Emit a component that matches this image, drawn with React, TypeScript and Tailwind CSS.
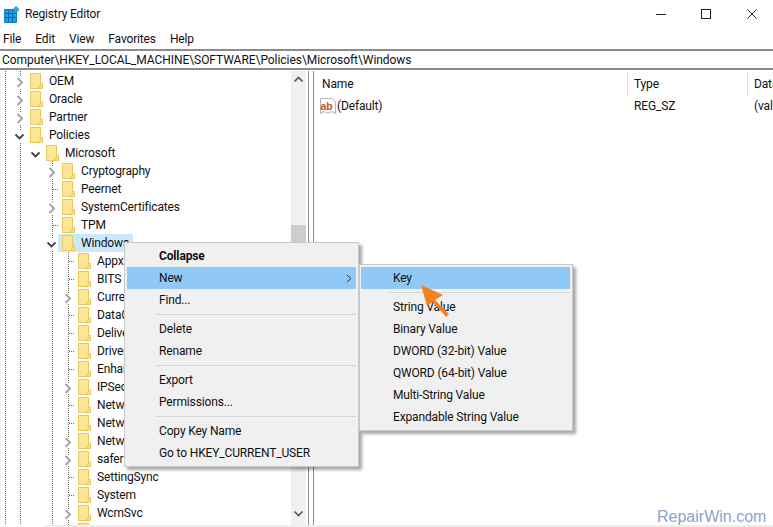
const F = "font-['Roboto','Open_Sans',sans-serif]";

function Folder() {
  return (
    <svg width="13" height="16" viewBox="0 0 13 16" className="shrink-0">
      <path d="M.5.5H10.5V10.5H12.5V15.5H.5Z" fill="#fde596" stroke="#ecc75a" />
      <path d="M10.5 10.5V13.5H9.5V15.5" fill="none" stroke="#ecc75a" />
    </svg>
  );
}

function Chevron({ dir }: { dir?: "r" | "d" }) {
  if (!dir) return <span className="w-[9px] shrink-0" />;
  return (
    <svg width="9" height="11" viewBox="0 0 9 11" className="mt-[2px] shrink-0 bg-white">
      {dir === "r" ? (
        <path d="M2.5 1L7 5.5L2.5 10" fill="none" stroke="#a6a6a6" strokeWidth="2" />
      ) : (
        <path d="M.5 3.5L4.5 7.5L8.5 3.5" fill="none" stroke="#404040" strokeWidth="1.8" />
      )}
    </svg>
  );
}

type Row = { t: string; d: number; c?: "r" | "d"; sel?: boolean };
const rows: Row[] = [
  { t: "OEM", d: 0, c: "r" },
  { t: "Oracle", d: 0, c: "r" },
  { t: "Partner", d: 0, c: "r" },
  { t: "Policies", d: 0, c: "d" },
  { t: "Microsoft", d: 1, c: "d" },
  { t: "Cryptography", d: 2, c: "r" },
  { t: "Peernet", d: 2 },
  { t: "SystemCertificates", d: 2, c: "r" },
  { t: "TPM", d: 2 },
  { t: "Windows", d: 2, c: "d", sel: true },
  { t: "AppxPackage", d: 3 },
  { t: "BITS", d: 3 },
  { t: "CurrentVersion", d: 3, c: "r" },
  { t: "DataCollection", d: 3 },
  { t: "DeliveryOptimization", d: 3 },
  { t: "DriverSearching", d: 3 },
  { t: "EnhancedStorage", d: 3 },
  { t: "IPSec", d: 3, c: "r" },
  { t: "Network Connections", d: 3 },
  { t: "NetworkConnectivity", d: 3 },
  { t: "NetworkProvider", d: 3, c: "r" },
  { t: "safer", d: 3, c: "r" },
  { t: "SettingSync", d: 3 },
  { t: "System", d: 3 },
  { t: "WcmSvc", d: 3, c: "r" },
  { t: "", d: 3 },
];

function TreeRow({ r }: { r: Row }) {
  const pad = ["pl-[15px]", "pl-[31px]", "pl-[47px]", "pl-[63px]"][r.d];
  return (
    <div className={`relative flex h-[18px] items-center ${pad}`}>
      <Chevron dir={r.c} />
      <div className={`ml-[2px] flex h-[18px] items-center pl-[4px] pr-[4px] ${r.sel ? "bg-[#cce8ff]" : ""}`}>
        <Folder />
        <span className="ml-[6px] whitespace-nowrap">{r.t}</span>
      </div>
    </div>
  );
}

function Guides() {
  const v = (x: number, y1: number, y2: number) => (
    <line key={"v" + x} x1={x + 0.5} x2={x + 0.5} y1={y1} y2={y2} stroke="#666" strokeDasharray="1 1" />
  );
  const h = (y: number, x1: number, x2: number) => (
    <line key={"h" + y} y1={y + 0.5} y2={y + 0.5} x1={x1} x2={x2} stroke="#666" strokeDasharray="1 1" />
  );
  return (
    <svg className="pointer-events-none absolute left-0 top-0" width="124" height="456">
      {v(5, 0, 456)}
      {v(20, 0, 456)}
      {v(52, 90, 456)}
      {v(68, 181, 456)}
      {[189, 225].map((y) => h(y - 71, 53, 59))}
      {[261, 279, 315, 333, 351, 369, 405, 423, 477, 495].map((y) => h(y - 71, 69, 75))}
    </svg>
  );
}

function MenuItem({ t, hi, bold, arrow }: { t: string; hi?: boolean; bold?: boolean; arrow?: boolean }) {
  return (
    <div className={`relative flex h-[22px] items-center pl-[32px] whitespace-nowrap ${hi ? "bg-[#90c8f6]" : ""} ${bold ? "font-bold" : ""}`}>
      {t}
      {arrow && (
        <svg width="6" height="9" viewBox="0 0 6 9" className="absolute right-[4px] top-[7px]">
          <path d="M1 1L5 4.5L1 8" fill="none" stroke="#333" />
        </svg>
      )}
    </div>
  );
}

const Sep = () => <div className="my-[3px] ml-[28px] h-px bg-[#d7d7d7]" />;

export default function App() {
  return (
    <div className={`${F} relative flex h-[527px] w-[773px] flex-col overflow-hidden bg-white text-[12px] leading-none tracking-[-0.15px] text-[#111]`}>
      {/* title bar */}
      <div className="flex h-[30px] shrink-0 items-center pb-[2px]">
        <svg width="16" height="17" viewBox="0 0 16 17" className="ml-[4px]">
          <path d="M.5 3.5H12.5V16.5H.5Z" fill="#1f9fe2" stroke="#0a7cc4" />
          <path d="M4.5 4V16M8.5 4V16M1 7.5H12M1 11.5H12" stroke="#0b6aa8" />
          <path d="M12 .5L15 3.5L12 6.5L9 3.5Z" fill="#3aa5e0" stroke="#0a7cc4" strokeWidth="0.8" />
        </svg>
        <span className="ml-[5px]">Registry Editor</span>
        <div className="ml-auto flex items-center pb-[1px]">
          <svg width="10" height="10" viewBox="0 0 10 10" className="mr-[35px]"><path d="M0 5.5H10" stroke="#222" /></svg>
          <svg width="10" height="10" viewBox="0 0 10 10" className="mr-[36px]"><rect x=".5" y=".5" width="9" height="9" fill="none" stroke="#222" /></svg>
          <svg width="10" height="10" viewBox="0 0 10 10" className="mr-[16px]"><path d="M.5.5L9.5 9.5M9.5.5L.5 9.5" stroke="#222" /></svg>
        </div>
      </div>
      {/* menu */}
      <div className="flex h-[18px] shrink-0 items-center gap-[14px] pl-[3px]">
        {["File", "Edit", "View", "Favorites", "Help"].map((m) => (
          <span key={m}>{m}</span>
        ))}
      </div>
      {/* address */}
      <div className="mt-px flex h-[21px] shrink-0 items-center border-y-2 border-[#8c8c8c] pl-[2px] tracking-[-0.05px]">
        Computer\HKEY_LOCAL_MACHINE\SOFTWARE\Policies\Microsoft\Windows
      </div>
      {/* panes */}
      <div className="flex min-h-0 flex-1 pt-px">
        <div className="relative flex w-[306px] shrink-0 overflow-hidden">
          <Guides />
          <div className="min-w-0 flex-1 overflow-hidden pt-[1px]">
            {rows.map((r, i) => (
              <TreeRow key={i} r={r} />
            ))}
          </div>
          {/* vertical scrollbar */}
          <div className="flex w-[15px] shrink-0 flex-col bg-[#f0f0f0] pb-[3px]">
            <svg width="15" height="17" viewBox="0 0 15 17"><path d="M3.5 10.5L7.5 6.5L11.5 10.5" fill="none" stroke="#555" strokeWidth="1.6" /></svg>
            <div className="mt-[137px] h-[228px] bg-[#cdcdcd]" />
            <div className="flex-1" />
            <svg width="15" height="17" viewBox="0 0 15 17"><path d="M3.5 6.5L7.5 10.5L11.5 6.5" fill="none" stroke="#555" strokeWidth="1.6" /></svg>
          </div>
        </div>
        {/* splitter */}
        <div className="ml-[2px] w-[6px] shrink-0 border-x border-[#8c8c8c]" />
        {/* values */}
        <div className="mt-px min-w-0 flex-1 overflow-hidden">
          <div className="flex h-[24px] items-center">
            <div className="flex h-full w-[314px] shrink-0 items-center border-r border-[#e3e3e3] pl-[8px]">Name</div>
            <div className="flex h-full w-[120px] shrink-0 items-center border-r border-[#e3e3e3] pl-[6px]">Type</div>
            <div className="flex h-full shrink-0 items-center pl-[6px]">Data</div>
          </div>
          <div className="flex h-[20px] items-center">
            <div className="flex w-[314px] shrink-0 items-center pl-[6px]">
              <svg width="16" height="16" viewBox="0 0 16 16">
                <path d="M.5.5H11.5L15.5 3.5V15.5L12 13.5L8 15.5L4 13.5L.5 15.5Z" fill="#fff" stroke="#b5b5b5" />
                <text x="0.5" y="11.5" fontSize="10.5" fontWeight="700" fill="#d8491f" fontFamily="Liberation Sans">ab</text>
              </svg>
              <span className="ml-[1px]">(Default)</span>
            </div>
            <div className="w-[120px] shrink-0 pl-[6px]">REG_SZ</div>
            <div className="shrink-0 whitespace-nowrap pl-[6px]">(value not set)</div>
          </div>
        </div>
      </div>
      {/* bottom horizontal scrollbar strip */}
      <div className="ml-[44px] h-[2px] shrink-0 bg-[#eeeeee]" />

      {/* context menu */}
      <div className="absolute left-[124px] top-[242px] w-[235px] border border-[#c9c9c9] bg-[#f0f0f0] p-[2px] shadow-[3px_3px_3px_rgba(0,0,0,0.35)]">
        <MenuItem t="Collapse" bold />
        <MenuItem t="New" hi arrow />
        <MenuItem t="Find..." />
        <Sep />
        <MenuItem t="Delete" />
        <MenuItem t="Rename" />
        <Sep />
        <MenuItem t="Export" />
        <MenuItem t="Permissions..." />
        <Sep />
        <MenuItem t="Copy Key Name" />
        <MenuItem t="Go to HKEY_CURRENT_USER" />
      </div>
      {/* submenu */}
      <div className="absolute left-[359px] top-[264px] w-[214px] border border-[#c9c9c9] bg-[#f0f0f0] py-[2px] pl-[1px] pr-[2px] shadow-[3px_3px_3px_rgba(0,0,0,0.35)]">
        <MenuItem t="Key" hi />
        <Sep />
        <MenuItem t="String Value" />
        <MenuItem t="Binary Value" />
        <MenuItem t="DWORD (32-bit) Value" />
        <MenuItem t="QWORD (64-bit) Value" />
        <MenuItem t="Multi-String Value" />
        <MenuItem t="Expandable String Value" />
      </div>
      {/* orange arrow */}
      <svg className="absolute left-[415px] top-[280px]" width="36" height="40" viewBox="0 0 36 40">
        <path d="M6 5L28 15L20 20L34 34L31 37L18 22L12 26Z" fill="#f58220" />
      </svg>
      {/* watermark */}
      <span className="absolute left-[657px] top-[509px] font-['Liberation_Sans',sans-serif] text-[16px] tracking-normal text-[#8aa5c9]">RepairWin.com</span>
    </div>
  );
}
